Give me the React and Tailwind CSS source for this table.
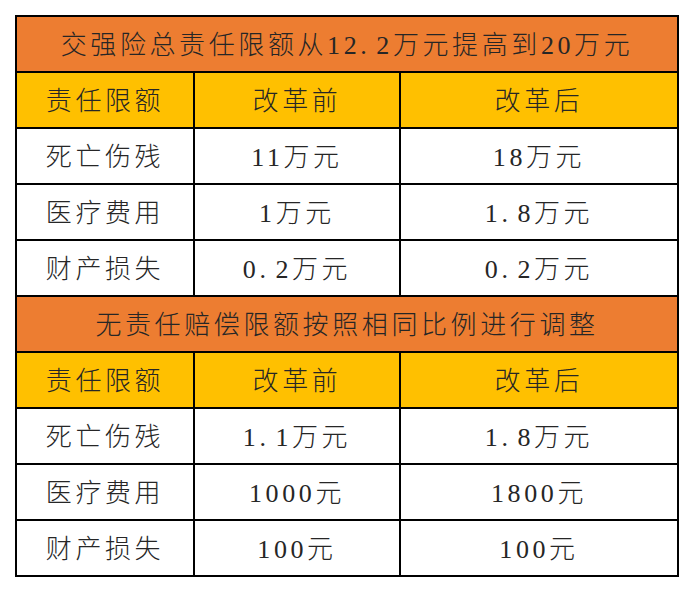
import React from "react";

const sections = [
  {
    title: "交强险总责任限额从12.2万元提高到20万元",
    rows: [
      ["死亡伤残", "11万元", "18万元"],
      ["医疗费用", "1万元", "1.8万元"],
      ["财产损失", "0.2万元", "0.2万元"],
    ],
  },
  {
    title: "无责任赔偿限额按照相同比例进行调整",
    rows: [
      ["死亡伤残", "1.1万元", "1.8万元"],
      ["医疗费用", "1000元", "1800元"],
      ["财产损失", "100元", "100元"],
    ],
  },
];

// halfwidth period like the original (same width as digits)
function Txt({ children }) {
  const parts = children.split(".");
  return (
    <span>
      {parts.map((p, i) => (
        <React.Fragment key={i}>
          {i > 0 && <span className="inline-block w-[16px] text-left">.</span>}
          {p}
        </React.Fragment>
      ))}
    </span>
  );
}

function Cell({ children, className = "" }) {
  return (
    <div className={`flex h-[54px] items-center justify-center pt-[3px] ${className}`}>
      <Txt>{children}</Txt>
    </div>
  );
}

export default function App() {
  return (
    <div className="min-h-screen bg-white pl-[15px] pt-[15px]">
      <div
        className="grid w-[664px] grid-cols-[176px_204px_276px] gap-[2px] bg-black p-[2px] text-[26px] font-light tracking-[3.6px] text-[#262626]"
        style={{ fontFamily: '"Liberation Serif", "Noto Sans CJK SC", serif' }}
      >
        {sections.map((s) => (
          <React.Fragment key={s.title}>
            <Cell className="col-span-3 bg-[#ed7d31]">{s.title}</Cell>
            <Cell className="bg-[#ffc000]">责任限额</Cell>
            <Cell className="bg-[#ffc000]">改革前</Cell>
            <Cell className="bg-[#ffc000]">改革后</Cell>
            {s.rows.map((r) => (
              <React.Fragment key={r[0]}>
                <Cell className="bg-white">{r[0]}</Cell>
                <Cell className="bg-white">{r[1]}</Cell>
                <Cell className="bg-white">{r[2]}</Cell>
              </React.Fragment>
            ))}
          </React.Fragment>
        ))}
      </div>
    </div>
  );
}
